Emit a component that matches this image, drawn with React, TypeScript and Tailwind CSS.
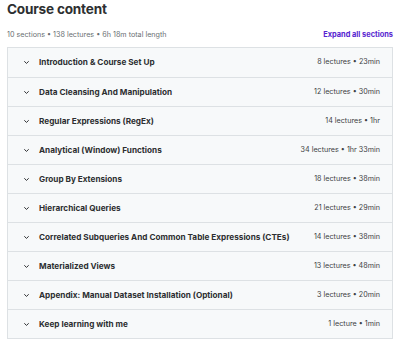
const SECTIONS: { title: string; meta: string }[] = [
	{ title: "Introduction & Course Set Up", meta: "8 lectures • 23min" },
	{ title: "Data Cleansing And Manipulation", meta: "12 lectures • 30min" },
	{ title: "Regular Expressions (RegEx)", meta: "14 lectures • 1hr" },
	{ title: "Analytical (Window) Functions", meta: "34 lectures • 1hr 33min" },
	{ title: "Group By Extensions", meta: "18 lectures • 38min" },
	{ title: "Hierarchical Queries", meta: "21 lectures • 29min" },
	{ title: "Correlated Subqueries And Common Table Expressions (CTEs)", meta: "14 lectures • 38min" },
	{ title: "Materialized Views", meta: "13 lectures • 48min" },
	{ title: "Appendix: Manual Dataset Installation (Optional)", meta: "3 lectures • 20min" },
	{ title: "Keep learning with me", meta: "1 lecture • 1min" },
];

function Chevron() {
	return (
		<svg width="7" height="5" viewBox="0 0 7 5" className="shrink-0">
			<path d="M1.3 1.3 L3.5 3.4 L5.7 1.3" fill="none" stroke="#2d2f31" strokeWidth="1" />
		</svg>
	);
}

export default function App() {
	return (
		<main className="w-[400px] h-[340px] overflow-hidden bg-white text-[#2d2f31] font-['Inter',sans-serif] pl-[7px] pr-[7px]">
			{/* Header */}
			<h1 className="text-[13.6px] leading-[18px] font-bold m-0 tracking-[-0.2px]">Course content</h1>
			<div className="flex justify-between items-center mt-[11px] h-[12px]">
				<span className="text-[7.2px] text-[#6a6f73]">10 sections • 138 lectures • 6h 18m total length</span>
				<span className="text-[7.4px] text-[#5624d0] font-bold">Expand all sections</span>
			</div>

			{/* Sections */}
			<div className="mt-[6px] border border-[#dde1e4]">
				{SECTIONS.map((s, i) => (
					<div
						key={s.title}
						className={`flex items-center h-[29px] bg-[#f7f9fa] pl-[15px] pr-[12px] ${i > 0 ? "border-t border-[#dde1e4]" : ""}`}
					>
						<Chevron />
						<span className="ml-[9px] text-[8.2px] font-bold flex-1 whitespace-nowrap">{s.title}</span>
						<span className="text-[7.2px] text-[#3e4143] ml-2 shrink-0">{s.meta}</span>
					</div>
				))}
			</div>
		</main>
	);
}
